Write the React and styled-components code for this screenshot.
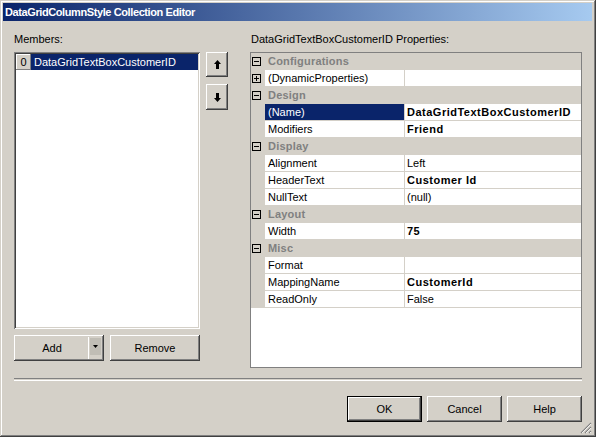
import React from 'react';
import styled, { createGlobalStyle } from 'styled-components';

const GlobalStyle = createGlobalStyle`
  html, body { margin: 0; padding: 0; background: #d4d0c8; }
  body { font-family: "Liberation Sans", Arial, sans-serif; font-size: 11px; }
`;

const raised = `
  box-shadow: inset -1px -1px #404040, inset 1px 1px #ffffff,
    inset -2px -2px #808080, inset 2px 2px #d4d0c8;
`;

const sunken = `
  box-shadow: inset 1px 1px #808080, inset -1px -1px #ffffff,
    inset 2px 2px #404040, inset -2px -2px #d4d0c8;
`;

const Window = styled.div`
  width: 596px;
  height: 437px;
  box-sizing: border-box;
  padding: 3px 4px 4px 3px;
  background: #d4d0c8;
  box-shadow: inset -1px -1px #404040, inset 1px 1px #d4d0c8,
    inset -2px -2px #808080, inset 2px 2px #ffffff;
  display: flex;
  flex-direction: column;
  color: #000;
`;

const TitleBar = styled.div`
  height: 18px;
  display: flex;
  align-items: center;
  padding-left: 2px;
  background: linear-gradient(to right, #0a246a, #a6caf0);
  color: #fff;
  font-weight: bold;
  font-size: 11px;
  letter-spacing: -0.4px;
`;

const Body = styled.div`
  flex: 1;
  display: flex;
  flex-direction: column;
  padding: 11px 10px 0 11px;
`;

const Main = styled.div`
  display: flex;
  align-items: flex-start;
`;

const Pane = styled.div`
  display: flex;
  flex-direction: column;
  width: ${p => p.width}px;
  margin-left: ${p => p.offset || 0}px;
`;

const Label = styled.div`
  height: 14px;
  line-height: 14px;
  margin-bottom: 6px;
  padding-left: ${p => p.indent || 0}px;
`;

const ListBox = styled.div`
  height: 277px;
  background: #fff;
  padding: 2px;
  box-sizing: border-box;
  ${sunken}
`;

const ListItem = styled.div`
  display: flex;
  height: 16px;
`;

const IndexCell = styled.div`
  width: 15px;
  display: flex;
  align-items: center;
  justify-content: center;
  background: #d4d0c8;
  box-shadow: inset -1px -1px #808080, inset 1px 1px #ffffff;
`;

const ItemText = styled.div`
  flex: 1;
  padding-left: 3px;
  line-height: 16px;
  background: ${p => (p.selected ? '#0a246a' : 'transparent')};
  color: ${p => (p.selected ? '#fff' : '#000')};
`;

const ButtonRow = styled.div`
  display: flex;
  gap: 6px;
  margin-top: 6px;
`;

const Button = styled.button`
  all: unset;
  box-sizing: border-box;
  width: ${p => p.width || 75}px;
  height: ${p => p.height || 26}px;
  display: flex;
  align-items: center;
  justify-content: center;
  font-family: "Liberation Sans", Arial, sans-serif;
  font-size: 11px;
  color: #000;
  background: #d4d0c8;
  ${raised}
  ${p => p.primary && `
    box-shadow: inset -1px -1px #000, inset 1px 1px #000,
      inset -2px -2px #404040, inset 2px 2px #ffffff,
      inset -3px -3px #808080;
  `}
`;

const SplitButton = styled.div`
  width: 90px;
  height: 26px;
  box-sizing: border-box;
  display: flex;
  padding: 2px;
  background: #d4d0c8;
  ${raised}
`;

const SplitMain = styled.div`
  flex: 1;
  display: flex;
  align-items: center;
  justify-content: center;
  border-right: 1px solid #fff;
`;

const SplitDrop = styled.div`
  width: 11px;
  margin: 1px 1px 4px 1px;
  display: flex;
  align-items: center;
  justify-content: center;
  background: #c0bdb5;
`;

const ArrowCol = styled.div`
  display: flex;
  flex-direction: column;
  gap: 7px;
  margin: 20px 0 0 6px;
`;

const PropGrid = styled.div`
  height: 316px;
  box-sizing: border-box;
  border: 1px solid #808080;
  background: #fff;
`;

const Row = styled.div`
  display: grid;
  grid-template-columns: 14px 139px 1px 1fr;
  height: 17px;
  background: ${p => (p.category ? '#d4d0c8' : '#fff')};
`;

const Gutter = styled.div`
  background: #d4d0c8;
  display: flex;
  align-items: center;
  padding-left: 1px;
`;

const CategoryText = styled.div`
  grid-column: 2 / 5;
  padding-left: 3px;
  line-height: 17px;
  font-weight: bold;
  letter-spacing: 0.2px;
  color: #808080;
`;

const NameCell = styled.div`
  line-height: 16px;
  height: 16px;
  padding-left: 3px;
  border-bottom: 1px solid #d4d0c8;
  background: ${p => (p.selected ? '#0a246a' : '#fff')};
  color: ${p => (p.selected ? '#fff' : '#000')};
  white-space: nowrap;
`;

const Divider = styled.div`
  background: #d4d0c8;
`;

const ValueCell = styled.div`
  line-height: 16px;
  height: 16px;
  padding-left: 2px;
  border-bottom: 1px solid #d4d0c8;
  font-weight: ${p => (p.bold ? 'bold' : 'normal')};
  letter-spacing: ${p => (p.bold ? '0.5px' : '0')};
  white-space: nowrap;
`;

const Separator = styled.div`
  margin-top: 10px;
  height: 1px;
  border-top: 1px solid #808080;
  border-bottom: 1px solid #fff;
`;

const Footer = styled.div`
  display: flex;
  justify-content: flex-end;
  gap: 5px;
  margin-top: 15px;
  position: relative;
`;

const Grip = styled.svg`
  position: absolute;
  right: -10px;
  bottom: -12px;
`;

const Box = ({ plus }) => (
  <svg width="9" height="9" viewBox="0 0 9 9">
    <rect x="0.5" y="0.5" width="8" height="8" fill="none" stroke="#000" />
    <line x1="2" y1="4.5" x2="7" y2="4.5" stroke="#000" />
    {plus && <line x1="4.5" y1="2" x2="4.5" y2="7" stroke="#000" />}
  </svg>
);

const Arrow = ({ down }) => (
  <svg width="7" height="9" viewBox="0 0 7 9" style={down ? { transform: 'rotate(180deg)' } : null}>
    <path d="M3.5 0 L7 4 L5 4 L5 9 L2 9 L2 4 L0 4 Z" fill="#000" />
  </svg>
);

const props = [
  { cat: 'Configurations' },
  { name: '(DynamicProperties)', value: '', plus: true },
  { cat: 'Design' },
  { name: '(Name)', value: 'DataGridTextBoxCustomerID', bold: true, selected: true },
  { name: 'Modifiers', value: 'Friend', bold: true },
  { cat: 'Display' },
  { name: 'Alignment', value: 'Left' },
  { name: 'HeaderText', value: 'Customer Id', bold: true },
  { name: 'NullText', value: '(null)' },
  { cat: 'Layout' },
  { name: 'Width', value: '75', bold: true },
  { cat: 'Misc' },
  { name: 'Format', value: '' },
  { name: 'MappingName', value: 'CustomerId', bold: true },
  { name: 'ReadOnly', value: 'False' },
];

const App = () => (
  <>
    <GlobalStyle />
    <Window>
      <TitleBar>DataGridColumnStyle Collection Editor</TitleBar>
      <Body>
        <Main>
          <Pane width={186}>
            <Label indent={-1}>Members:</Label>
            <ListBox>
              <ListItem>
                <IndexCell>0</IndexCell>
                <ItemText selected>DataGridTextBoxCustomerID</ItemText>
              </ListItem>
            </ListBox>
            <ButtonRow>
              <SplitButton>
                <SplitMain>Add</SplitMain>
                <SplitDrop>
                  <svg width="5" height="3" viewBox="0 0 5 3"><path d="M0 0 H5 L2.5 3 Z" fill="#000" /></svg>
                </SplitDrop>
              </SplitButton>
              <Button width={90}>Remove</Button>
            </ButtonRow>
          </Pane>
          <ArrowCol>
            <Button width={22} height={25}><Arrow /></Button>
            <Button width={22} height={26}><Arrow down /></Button>
          </ArrowCol>
          <Pane width={333} offset={22}>
            <Label indent={1}>DataGridTextBoxCustomerID Properties:</Label>
            <PropGrid>
              {props.map((p, i) =>
                p.cat ? (
                  <Row key={i} category>
                    <Gutter><Box /></Gutter>
                    <CategoryText>{p.cat}</CategoryText>
                  </Row>
                ) : (
                  <Row key={i}>
                    <Gutter>{p.plus && <Box plus />}</Gutter>
                    <NameCell selected={p.selected}>{p.name}</NameCell>
                    <Divider />
                    <ValueCell bold={p.bold}>{p.value}</ValueCell>
                  </Row>
                )
              )}
            </PropGrid>
          </Pane>
        </Main>
        <Separator />
        <Footer>
          <Button primary>OK</Button>
          <Button>Cancel</Button>
          <Button>Help</Button>
          <Grip width="12" height="12" viewBox="0 0 12 12">
            <path d="M11 1 L1 11 M11 5 L5 11 M11 9 L9 11" stroke="#808080" strokeWidth="1.2" />
            <path d="M11 2 L2 11 M11 6 L6 11 M11 10 L10 11" stroke="#ffffff" strokeWidth="0.8" />
          </Grip>
        </Footer>
      </Body>
    </Window>
  </>
);

export default App;
